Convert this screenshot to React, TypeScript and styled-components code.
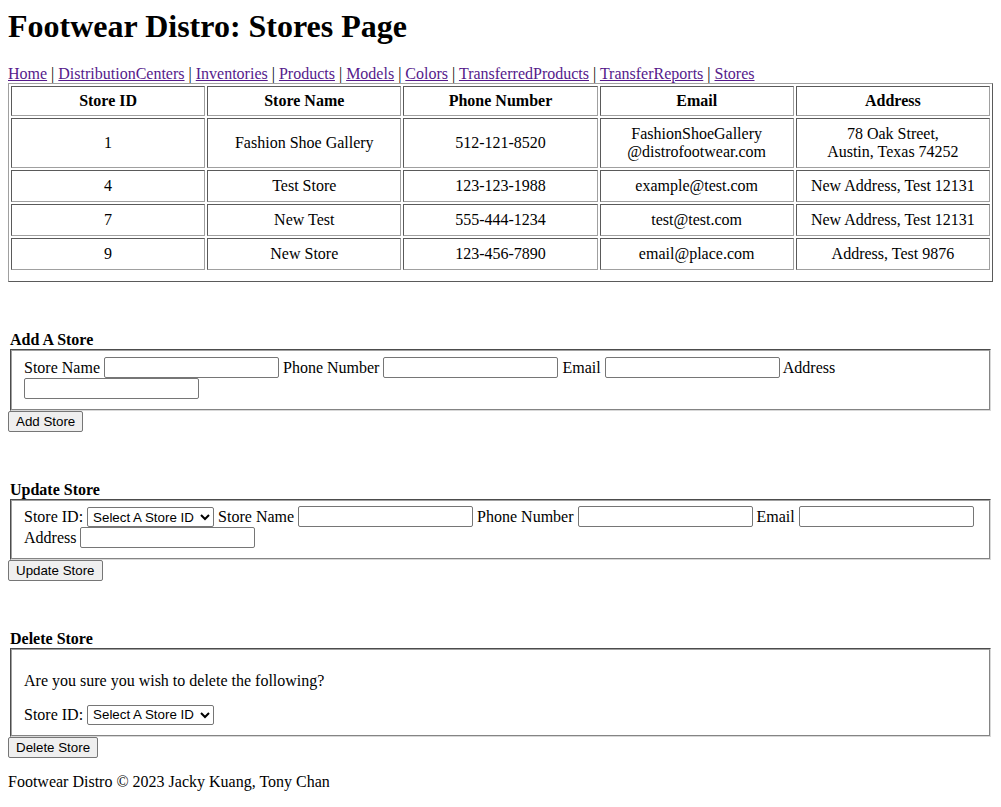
import React from "react";
import styled, { createGlobalStyle } from "styled-components";

const GlobalStyle = createGlobalStyle`
  body {
    margin: 8px;
    background: #ffffff;
    color: #000000;
    font-family: "Liberation Serif", "Times New Roman", serif;
    font-size: 16px;
  }
`;

const Title = styled.h1`
  margin: 0 0 20px;
  font-size: 32px;
  font-weight: bold;
`;

const Nav = styled.nav`
  line-height: normal;
`;

const NavLink = styled.a`
  color: #551a8b;
  text-decoration: underline;
`;

const Table = styled.table`
  width: 100%;
  table-layout: fixed;
  border-collapse: separate;
  border-spacing: 2px;
  border: 1px solid;
  border-color: #a0a0a0 #5a5a5a #5a5a5a #a0a0a0;
  padding-bottom: 9px;
`;

const Cell = styled.td<{ $head?: boolean }>`
  border: 1px solid;
  border-color: #5a5a5a #a0a0a0 #a0a0a0 #5a5a5a;
  padding: ${(p) => (p.$head ? "5px" : "6px")} 4px;
  text-align: center;
  font-weight: ${(p) => (p.$head ? "bold" : "normal")};
`;

const Section = styled.form`
  margin-top: 49px;
`;

const Legend = styled.legend`
  display: block;
  padding: 0 2px;
  font-weight: bold;
`;

const Fieldset = styled.fieldset`
  margin: 0 2px;
  padding: 5.6px 12px 10px;
  border: 2px groove #c0c0c0;
  border-color: #a0a0a0 #d8d8d8 #d8d8d8 #a0a0a0;
  line-height: 21px;
`;

const TextInput = styled.input`
  box-sizing: border-box;
  width: 175px;
  height: 21px;
  padding: 1px 3px;
  border: 1px solid #767676;
  border-radius: 2px;
  font-family: "Liberation Sans", Arial, sans-serif;
  font-size: 13.33px;
  vertical-align: bottom;
  background: #ffffff;
`;

const Select = styled.select`
  box-sizing: border-box;
  width: 127px;
  height: 20px;
  padding: 0 0 0 1px;
  border: 1px solid #767676;
  border-radius: 2px;
  font-family: "Liberation Sans", Arial, sans-serif;
  font-size: 13.33px;
  color: #000000;
  background: #ffffff;
  vertical-align: bottom;
`;

const Button = styled.button`
  box-sizing: border-box;
  height: 21px;
  padding: 1px 7px;
  border: 1px solid #767676;
  border-radius: 2px;
  background: #efefef;
  font-family: "Liberation Sans", Arial, sans-serif;
  font-size: 13.33px;
  color: #000000;
  line-height: 15px;
  display: block;
`;

const Para = styled.p`
  margin: 16px 0 14px;
  line-height: normal;
`;

const Footer = styled.p`
  margin: 15px 0 16px;
`;

const stores = [
  { id: "1", name: "Fashion Shoe Gallery", phone: "512-121-8520", email: ["FashionShoeGallery", "@distrofootwear.com"], address: ["78 Oak Street,", "Austin, Texas 74252"] },
  { id: "4", name: "Test Store", phone: "123-123-1988", email: ["example@test.com"], address: ["New Address, Test 12131"] },
  { id: "7", name: "New Test", phone: "555-444-1234", email: ["test@test.com"], address: ["New Address, Test 12131"] },
  { id: "9", name: "New Store", phone: "123-456-7890", email: ["email@place.com"], address: ["Address, Test 9876"] },
];

const links = ["Home", "DistributionCenters", "Inventories", "Products", "Models", "Colors", "TransferredProducts", "TransferReports", "Stores"];

const Lines = ({ parts }: { parts: string[] }) => (
  <>
    {parts.map((p, i) => (
      <React.Fragment key={i}>
        {i > 0 && <br />}
        {p}
      </React.Fragment>
    ))}
  </>
);

const Field = ({ label }: { label: string }) => (
  <>
    <label>{label}</label> <TextInput type="text" />{" "}
  </>
);

const StoreSelect = () => (
  <>
    <label>Store ID:</label>{" "}
    <Select defaultValue="">
      <option value="">Select A Store ID</option>
      {stores.map((s) => (
        <option key={s.id} value={s.id}>
          {s.id}
        </option>
      ))}
    </Select>{" "}
  </>
);

export default function App() {
  return (
    <>
      <GlobalStyle />
      <Title>Footwear Distro: Stores Page</Title>
      <Nav>
        {links.map((l, i) => (
          <React.Fragment key={l}>
            {i > 0 && " | "}
            <NavLink href="#">{l}</NavLink>
          </React.Fragment>
        ))}
      </Nav>
      <Table>
        <thead>
          <tr>
            <Cell as="th" $head>Store ID</Cell>
            <Cell as="th" $head>Store Name</Cell>
            <Cell as="th" $head>Phone Number</Cell>
            <Cell as="th" $head>Email</Cell>
            <Cell as="th" $head>Address</Cell>
          </tr>
        </thead>
        <tbody>
          {stores.map((s) => (
            <tr key={s.id}>
              <Cell>{s.id}</Cell>
              <Cell>{s.name}</Cell>
              <Cell>{s.phone}</Cell>
              <Cell><Lines parts={s.email} /></Cell>
              <Cell><Lines parts={s.address} /></Cell>
            </tr>
          ))}
        </tbody>
      </Table>

      <Section onSubmit={(e) => e.preventDefault()}>
        <Legend>Add A Store</Legend>
        <Fieldset>
          <Field label="Store Name" />
          <Field label="Phone Number" />
          <Field label="Email" />
          <Field label="Address" />
        </Fieldset>
        <Button type="submit">Add Store</Button>
      </Section>

      <Section onSubmit={(e) => e.preventDefault()}>
        <Legend>Update Store</Legend>
        <Fieldset>
          <StoreSelect />
          <Field label="Store Name" />
          <Field label="Phone Number" />
          <Field label="Email" />
          <Field label="Address" />
        </Fieldset>
        <Button type="submit">Update Store</Button>
      </Section>

      <Section onSubmit={(e) => e.preventDefault()}>
        <Legend>Delete Store</Legend>
        <Fieldset>
          <Para>Are you sure you wish to delete the following?</Para>
          <StoreSelect />
        </Fieldset>
        <Button type="submit">Delete Store</Button>
      </Section>

      <Footer>Footwear Distro © 2023 Jacky Kuang, Tony Chan</Footer>
    </>
  );
}
